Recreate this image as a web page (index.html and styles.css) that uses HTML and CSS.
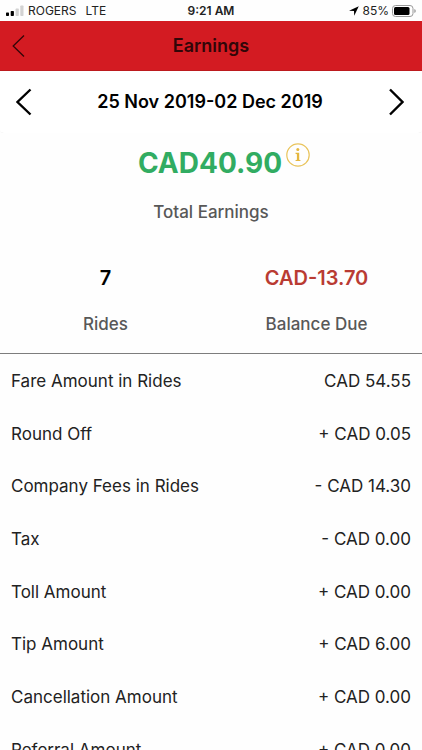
FILE: index.html
```html
<!DOCTYPE html>
<html lang="en">
<head>
<meta charset="utf-8">
<meta name="viewport" content="width=device-width, initial-scale=1">
<title>Earnings</title>
<link rel="stylesheet" href="styles.css">
</head>
<body>
<div class="status">
  <div class="status-side">
    <svg class="signal" width="18" height="12" viewBox="0 0 18 12" aria-hidden="true">
      <rect x="0" y="7.500" width="3" height="3.500" rx=".7"/>
      <rect x="4.700" y="6" width="3.200" height="5" rx=".7"/>
      <rect class="off" x="9.600" y="3.500" width="3.200" height="7.500" rx=".7"/>
      <rect class="off" x="14.300" y="0.500" width="3.200" height="10.500" rx=".7"/>
    </svg>
    <span>ROGERS</span>
    <span class="network">LTE</span>
  </div>
  <time class="clock">9:21 AM</time>
  <div class="status-side status-right">
    <svg width="10" height="10" viewBox="0 0 10 10" aria-hidden="true"><path d="M9.800.2 0 4.800l5 .2.200 4.800z"/></svg>
    <span class="percent">85%</span>
    <svg width="24" height="12" viewBox="0 0 24 12" aria-hidden="true">
      <rect x=".5" y=".5" width="20.500" height="11" rx="3" fill="none" stroke="#999"/>
      <rect x="2" y="2" width="15.500" height="8" rx="1.500"/>
      <path d="M22.300 4q1.500.5 1.500 2t-1.500 2z" fill="#999"/>
    </svg>
  </div>
</div>
<header class="titlebar">
  <button class="back" type="button" aria-label="Back">
    <svg width="13" height="24" viewBox="0 0 13 24" aria-hidden="true"><path d="M12 1.500 1.200 12 12 22.500"/></svg>
  </button>
  <h1>Earnings</h1>
</header>
<nav class="period" aria-label="Period">
  <button type="button" aria-label="Previous week">
    <svg width="16" height="28" viewBox="0 0 16 28" aria-hidden="true"><path d="M14.500 1.500 1.500 14l13 12.500"/></svg>
  </button>
  <h2>25 Nov 2019-02 Dec 2019</h2>
  <button type="button" aria-label="Next week">
    <svg width="16" height="28" viewBox="0 0 16 28" aria-hidden="true"><path d="M2 1.500 14.500 14 2 26.500"/></svg>
  </button>
</nav>
<main>
  <section class="total">
    <div class="amount-line">
      <strong class="amount">CAD40.90</strong>
      <button class="info" type="button" aria-label="About total earnings">
        <svg width="24" height="24" viewBox="0 0 24 24" aria-hidden="true">
          <circle class="ring" cx="12" cy="12" r="11.200"/>
          <circle cx="11.800" cy="6.500" r="1.500"/>
          <path d="M9.500 9.800h3.700v6.900l1.300.5v.8h-5v-.8l1.400-.5v-5.500l-1.400-.5z"/>
        </svg>
      </button>
    </div>
    <p class="caption">Total Earnings</p>
  </section>
  <section class="stats">
    <div><strong>7</strong><p class="caption">Rides</p></div>
    <div><strong class="due">CAD-13.70</strong><p class="caption">Balance Due</p></div>
  </section>
  <table class="breakdown">
    <tbody>
      <tr><th scope="row">Fare Amount in Rides</th><td>CAD 54.55</td></tr>
      <tr><th scope="row">Round Off</th><td>+ CAD 0.05</td></tr>
      <tr><th scope="row">Company Fees in Rides</th><td>- CAD 14.30</td></tr>
      <tr><th scope="row">Tax</th><td>- CAD 0.00</td></tr>
      <tr><th scope="row">Toll Amount</th><td>+ CAD 0.00</td></tr>
      <tr><th scope="row">Tip Amount</th><td>+ CAD 6.00</td></tr>
      <tr><th scope="row">Cancellation Amount</th><td>+ CAD 0.00</td></tr>
      <tr><th scope="row">Referral Amount</th><td>+ CAD 0.00</td></tr>
    </tbody>
  </table>
</main>
</body>
</html>
```
FILE: styles.css
```css
* { box-sizing: border-box; }
body {
  margin: 0;
  height: 100vh;
  display: flex;
  flex-direction: column;
  background: #fefefe;
  color: #000;
  font-family: Inter, Roboto, "Liberation Sans", sans-serif;
}
h1, h2, p { margin: 0; }
button {
  padding: 0;
  border: 0;
  background: none;
  color: inherit;
  display: flex;
}
svg { display: block; flex: none; }

.status {
  display: grid;
  grid-template-columns: 1fr auto 1fr;
  align-items: center;
  height: 21px;
  padding: 0 6px;
  font-size: 12px;
  line-height: 21px;
  color: #222;
}
.status-side { display: flex; align-items: center; gap: 4px; }
.status-right { justify-content: flex-end; gap: 3px; }
.network { margin-left: 5px; }
.signal .off { fill: #d2d2d2; }
.clock { font-weight: 600; }

.titlebar {
  display: grid;
  grid-template-columns: 1fr auto 1fr;
  align-items: center;
  height: 50px;
  padding: 0 12px;
  background: #d31b22;
  border-bottom: 1px solid #bc1a1e;
  color: #310608;
}
.titlebar h1 { font-size: 18px; line-height: 24px; font-weight: 600; }
.back path { fill: none; stroke: currentColor; stroke-width: 1.3; }

.period {
  display: flex;
  align-items: center;
  justify-content: space-between;
  height: 62px;
  padding: 0 18px 0 16px;
  background: #fff;
  border-radius: 0 0 4px 4px;
  box-shadow: 0 1px 1px -1px #ccc;
}
.period h2 { font-size: 18px; line-height: 24px; font-weight: 600; }
.period path { fill: none; stroke: #000; stroke-width: 2.4; }

main {
  flex: 1;
  min-height: 0;
  overflow-y: auto;
  scrollbar-width: none;
  background: #fefefe;
}
.total { padding-top: 10px; text-align: center; }
.amount-line {
  display: flex;
  justify-content: center;
  align-items: flex-start;
  gap: 4px;
  padding-left: 26px;
}
.amount { font-size: 28px; line-height: 40px; font-weight: 700; color: #31ac62; }
.info { fill: #e5b73f; }
.info .ring { fill: none; stroke: #e9c45c; stroke-width: 1.2; }
.caption { font-size: 17px; line-height: 24px; font-weight: 500; color: #585858; }
.total .caption { margin-top: 17px; }

.stats {
  display: grid;
  grid-template-columns: 1fr 1fr;
  margin-top: 40px;
  padding-bottom: 17px;
  border-bottom: 1px solid #7d7d7d;
  text-align: center;
}
.stats strong {
  display: block;
  margin-bottom: 20px;
  font-size: 20px;
  line-height: 28px;
  font-weight: 600;
}
.stats .due { color: #b93b33; }

.breakdown {
  width: 100%;
  border-collapse: collapse;
  font-size: 17px;
  line-height: 24px;
  color: #222;
}
.breakdown tr { height: 53px; }
.breakdown tr:nth-child(3n) { height: 52px; }
.breakdown th, .breakdown td { padding: 0 11px; font-weight: 400; }
.breakdown th { text-align: left; }
.breakdown td { text-align: right; white-space: nowrap; }
```
